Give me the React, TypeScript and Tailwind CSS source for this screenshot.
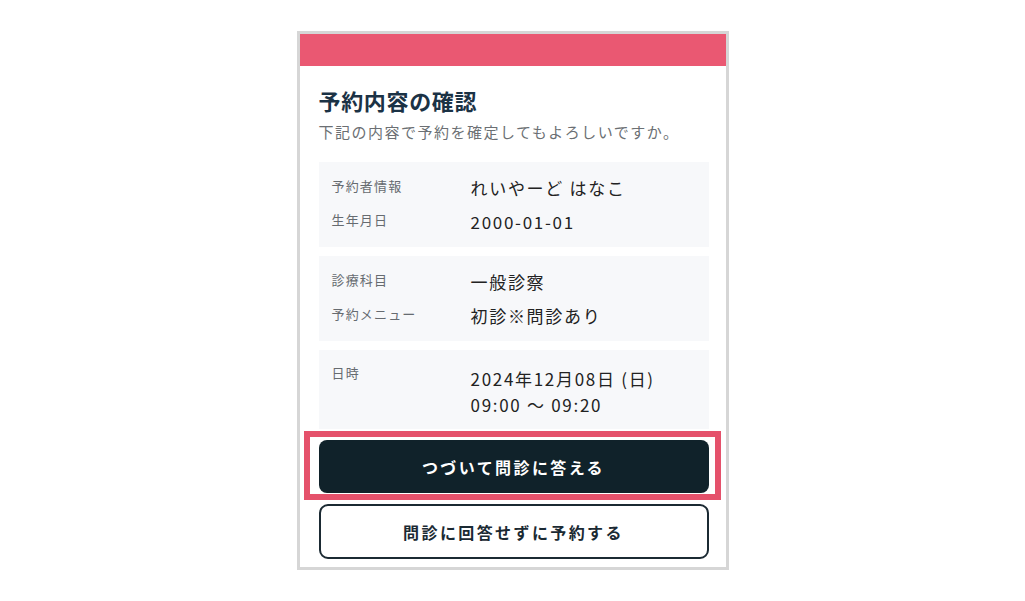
import React from 'react';

interface Row {
  label: string;
  values: string[];
}

const cards: { rows: Row[]; last?: boolean }[] = [
  {
    rows: [
      { label: '予約者情報', values: ['れいやーど はなこ'] },
      { label: '生年月日', values: ['2000-01-01'] }
    ]
  },
  {
    rows: [
      { label: '診療科目', values: ['一般診察'] },
      { label: '予約メニュー', values: ['初診※問診あり'] }
    ]
  },
  {
    rows: [{ label: '日時', values: ['2024年12月08日 (日)', '09:00 〜 09:20'] }],
    last: true
  }
];

const font = { fontFamily: '"Noto Sans CJK JP", "Noto Sans", sans-serif' };

const InfoCard: React.FC<{ rows: Row[]; last?: boolean }> = ({ rows, last }) => (
  <div
    className={
      last
        ? 'bg-[#f7f8fa] pl-[13px] pt-[16px] pb-[11px] flex flex-col gap-[10px]'
        : 'bg-[#f7f8fa] pl-[13px] pt-[14px] pb-[13px] flex flex-col gap-[10px]'
    }
  >
    {rows.map(row => (
      <div key={row.label} className="flex items-start">
        <div
          className={
            row.values.length > 1
              ? 'w-[139px] shrink-0 -mt-[3px] text-[13px] leading-[20px] tracking-[0.09em] text-[#666b70]'
              : 'w-[139px] shrink-0 text-[13px] leading-[20px] tracking-[0.09em] text-[#666b70]'
          }
        >
          {row.label}
        </div>
        <div className="flex flex-col">
          {row.values.map(v => (
            <span
              key={v}
              className={
                row.values.length > 1
                  ? 'text-[17px] leading-[26px] tracking-[0.1em] text-[#222]'
                  : 'text-[17px] leading-[24px] tracking-[0.1em] text-[#222]'
              }
            >
              {v}
            </span>
          ))}
        </div>
      </div>
    ))}
  </div>
);

export default function App() {
  return (
    <div className="w-full h-[601px] bg-white pt-[31px] overflow-hidden" style={font}>
      <div className="mx-auto w-[432px] border-[3px] border-[#d6d6d6] bg-white">
        <div className="h-[32px] bg-[#ea5872]" />

        <div className="pl-[19px] pr-[17px] pt-[20px]">
          <h1 className="text-[22px] leading-[28px] font-bold tracking-[0.03em] text-[#1b3245]">
            予約内容の確認
          </h1>
          <p className="mt-[8px] text-[15px] leading-[20px] tracking-[0.1em] text-[#6b6f73]">
            下記の内容で予約を確定してもよろしいですか。
          </p>

          <div className="mt-[20px] flex flex-col gap-[9px]">
            {cards.map((c, i) => (
              <InfoCard key={i} rows={c.rows} last={c.last} />
            ))}
          </div>
        </div>

        <div className="relative pl-[19px] pr-[17px] pt-[11px] pb-[8px] flex flex-col gap-[11px]">
          <button className="h-[53px] w-full rounded-lg bg-[#10222a] text-white text-[16px] font-bold tracking-[0.15em]">
            つづいて問診に答える
          </button>
          <button className="h-[55px] w-full rounded-[9px] border-2 border-[#1b2a33] bg-white text-[#1b2a33] text-[16px] font-bold tracking-[0.15em]">
            問診に回答せずに予約する
          </button>

          {/* annotation highlight */}
          <div className="absolute left-[4px] top-[2px] w-[417px] h-[69px] border-[6px] border-[#e5516b] pointer-events-none" />
        </div>
      </div>
    </div>
  );
}
